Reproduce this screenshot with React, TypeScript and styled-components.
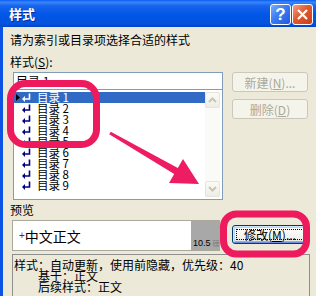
import React from 'react';
import styled, { createGlobalStyle } from 'styled-components';

const Global = createGlobalStyle`
  html, body { margin: 0; padding: 0; background: #ECE9D8; }
  body { font-family: "Noto Sans CJK SC", "Liberation Sans", sans-serif; font-size: 12px; color: #000; }
`;

const Window = styled.div`
  position: relative;
  width: 316px;
  height: 296px;
  overflow: hidden;
  background: #ECE9D8;
  display: flex;
  flex-direction: column;
`;

const TitleBar = styled.div`
  height: 27px;
  flex: none;
  display: flex;
  align-items: flex-start;
  padding: 0 3px 0 9px;
  background: linear-gradient(180deg, #0A5BF5 0%, #3A86F8 8%, #1763EE 22%, #0056E6 55%, #0552DF 88%, #0044C6 100%);
`;

const Title = styled.div`
  flex: 1;
  color: #fff;
  font-weight: bold;
  font-size: 13px;
  line-height: 16px;
  margin-top: 6px;
  text-shadow: 1px 1px 0 #0A2A9C;
`;

const TitleButtons = styled.div`
  display: flex;
  gap: 1px;
  margin-top: 4px;
`;

const TitleButton = styled.div<{ $variant: 'help' | 'close' }>`
  width: 21px;
  height: 21px;
  box-sizing: border-box;
  border: 1px solid #fff;
  border-radius: 3px;
  display: flex;
  align-items: center;
  justify-content: center;
  color: #fff;
  font-family: "Liberation Sans", sans-serif;
  font-weight: bold;
  font-size: 17px;
  background: ${p => p.$variant === 'help'
    ? 'linear-gradient(135deg, #79AEFF 0%, #3B7CF2 45%, #2258DA 100%)'
    : 'linear-gradient(135deg, #F4A088 0%, #E1592F 45%, #C8401A 100%)'};
`;

const Body = styled.div`
  flex: 1;
  min-height: 0;
  border-left: 3px solid #0B53E4;
  padding: 6px 0 0 7px;
  display: flex;
  flex-direction: column;
`;

const TextLine = styled.div<{ $gap?: number }>`
  height: 14px;
  line-height: 14px;
  margin-top: ${p => p.$gap ?? 0}px;
  white-space: nowrap;
`;

const Key = styled.span`
  text-decoration: underline;
`;

const MainRow = styled.div`
  display: flex;
  margin: 3px 0 0 3px;
  gap: 9px;
  align-items: flex-start;
`;

const LeftColumn = styled.div`
  width: 210px;
  display: flex;
  flex-direction: column;
`;

const InputBox = styled.div`
  height: 17px;
  box-sizing: border-box;
  border: 1px solid #7F9DB9;
  border-bottom: none;
  background: #fff;
  padding-left: 2px;
  line-height: 16px;
  white-space: nowrap;
`;

const ListBox = styled.div`
  height: 111px;
  box-sizing: border-box;
  border: 1px solid #7F9DB9;
  background: #fff;
  padding: 2px 2px 2px 0;
  display: flex;
`;

const Rows = styled.div`
  flex: 1;
  display: flex;
  flex-direction: column;
`;

const Row = styled.div<{ $selected?: boolean }>`
  height: 11px;
  flex: none;
  display: flex;
  align-items: center;
  background: ${p => (p.$selected ? '#316AC5' : 'transparent')};
  color: ${p => (p.$selected ? '#fff' : '#000')};
`;

const Marker = styled.div`
  width: 8px;
  height: 11px;
  display: flex;
  align-items: center;
  padding-left: 2px;
  box-sizing: border-box;
`;

const RowText = styled.span`
  margin-left: 6px;
  line-height: 11px;
  font-size: 11.5px;
  white-space: pre;
`;

const ScrollBar = styled.div`
  width: 15px;
  display: flex;
  flex-direction: column;
  justify-content: space-between;
  background: #FAFAF6;
`;

const ScrollButton = styled.div`
  height: 16px;
  box-sizing: border-box;
  border: 1px solid #E6E4DA;
  border-radius: 2px;
  background: linear-gradient(180deg, #FBFAF6, #EEEDE5);
  display: flex;
  align-items: center;
  justify-content: center;
`;

const RightColumn = styled.div`
  display: flex;
  flex-direction: column;
  gap: 7px;
`;

const DialogButton = styled.div<{ $disabled?: boolean }>`
  position: relative;
  width: 76px;
  height: ${p => (p.$disabled ? 20 : 19)}px;
  box-sizing: border-box;
  border-radius: 3px;
  display: flex;
  align-items: center;
  justify-content: center;
  white-space: nowrap;
  font-size: 12px;
  ${p => p.$disabled
    ? `border: 1px solid #CAC8BB; background: #F5F4EA; color: #ACA899;`
    : `border: 1px solid #003C74; background: linear-gradient(180deg, #FFFFFF 0%, #F3F2EC 70%, #E3E1D6 100%);
       box-shadow: inset 1px 1px 0 #CEE7FF, inset -1px -1px 0 #6A8FE0, inset 2px 2px 0 #BCD4F6, inset -2px -2px 0 #8FB0EC;
       &::after { content: ''; position: absolute; inset: 3px; border: 1px dotted #000; }`}
`;

const PreviewRow = styled.div`
  display: flex;
  align-items: flex-start;
  margin: 3px 0 0 2px;
`;

const PreviewBox = styled.div`
  width: 208px;
  height: 31px;
  box-sizing: border-box;
  border: 1px solid #ACA899;
  background: #fff;
  display: flex;
  margin-right: 12px;
`;

const PreviewText = styled.div`
  flex: 1;
  display: flex;
  align-items: center;
  padding-left: 6px;
  font-size: 14px;
`;

const Plus = styled.span`
  font-family: "Liberation Sans", sans-serif;
  font-size: 10px;
  color: #7A1248;
`;

const SizePanel = styled.div`
  width: 28px;
  background: #A8A8A8;
  display: flex;
  align-items: flex-end;
  padding: 0 0 2px 2px;
  box-sizing: border-box;
  white-space: nowrap;
`;

const SizeValue = styled.span`
  font-family: "Liberation Sans", sans-serif;
  font-size: 9px;
  line-height: 10px;
  color: #000;
`;

const SizeUnit = styled.span`
  font-size: 7px;
  line-height: 10px;
  color: #7A7A7A;
  margin-left: 2px;
`;

const ButtonSlot = styled.div`
  margin-top: 5px;
`;

const Description = styled.div`
  flex: 1;
  margin: 3px 0 0 2px;
  width: 298px;
  box-sizing: border-box;
  border: 1px solid #8E8F8F;
  border-bottom: none;
  padding: 4px 1px 0 1px;
  font-size: 12px;
  line-height: 11px;
`;

const DescLine = styled.div<{ $indent?: boolean }>`
  height: 11px;
  white-space: nowrap;
  padding-left: ${p => (p.$indent ? 24 : 0)}px;
`;

const Overlay = styled.svg`
  position: absolute;
  left: 0;
  top: 0;
  pointer-events: none;
`;

const ReturnIcon = ({ color }: { color: string }) => (
  <svg width="9" height="9" viewBox="0 0 9 9">
    <path d="M7.5 0.5 V6 H2.5" fill="none" stroke={color} strokeWidth="1.6" />
    <polygon points="0,6 3,3 3,9" fill={color} />
  </svg>
);

const Pointer = () => (
  <svg width="4" height="7" viewBox="0 0 4 7">
    <polygon points="0,0 4,3.5 0,7" fill="#000" />
  </svg>
);

const Chevron = ({ up }: { up?: boolean }) => (
  <svg width="9" height="6" viewBox="0 0 9 6">
    <polyline
      points={up ? '1,5 4.5,1.5 8,5' : '1,1 4.5,4.5 8,1'}
      fill="none"
      stroke="#C8C5B6"
      strokeWidth="2"
    />
  </svg>
);

const entries = [1, 2, 3, 4, 5, 6, 7, 8, 9];

export default function App() {
  return (
    <>
      <Global />
      <Window>
        <TitleBar>
          <Title>样式</Title>
          <TitleButtons>
            <TitleButton $variant="help">?</TitleButton>
            <TitleButton $variant="close">
              <svg width="13" height="13" viewBox="0 0 13 13">
                <path d="M2 2 L11 11 M11 2 L2 11" stroke="#fff" strokeWidth="2.2" />
              </svg>
            </TitleButton>
          </TitleButtons>
        </TitleBar>
        <Body>
          <TextLine>请为索引或目录项选择合适的样式</TextLine>
          <TextLine $gap={8}>
            样式(<Key>S</Key>):
          </TextLine>
          <MainRow>
            <LeftColumn>
              <InputBox>目录 1</InputBox>
              <ListBox>
                <Rows>
                  {entries.map(n => (
                    <Row key={n} $selected={n === 1}>
                      <Marker>{n === 1 && <Pointer />}</Marker>
                      <ReturnIcon color={n === 1 ? '#fff' : '#000080'} />
                      <RowText>目录 {n}</RowText>
                    </Row>
                  ))}
                </Rows>
                <ScrollBar>
                  <ScrollButton>
                    <Chevron up />
                  </ScrollButton>
                  <ScrollButton>
                    <Chevron />
                  </ScrollButton>
                </ScrollBar>
              </ListBox>
            </LeftColumn>
            <RightColumn>
              <DialogButton $disabled>
                新建(<Key>N</Key>)...
              </DialogButton>
              <DialogButton $disabled>
                删除(<Key>D</Key>)
              </DialogButton>
            </RightColumn>
          </MainRow>
          <TextLine $gap={3}>预览</TextLine>
          <PreviewRow>
            <PreviewBox>
              <PreviewText>
                <Plus>+</Plus>中文正文
              </PreviewText>
              <SizePanel>
                <SizeValue>10.5</SizeValue>
                <SizeUnit>磅</SizeUnit>
              </SizePanel>
            </PreviewBox>
            <ButtonSlot>
              <DialogButton>
                修改(<Key>M</Key>)...
              </DialogButton>
            </ButtonSlot>
          </PreviewRow>
          <Description>
            <DescLine>样式：自动更新，使用前隐藏，优先级：40</DescLine>
            <DescLine $indent>基于：正文</DescLine>
            <DescLine $indent>后续样式：正文</DescLine>
          </Description>
        </Body>
        <Overlay width="316" height="296" viewBox="0 0 316 296">
          <rect x="10.5" y="83.5" width="86" height="61" rx="15" fill="none" stroke="#EE1A5E" strokeWidth="7" />
          <rect x="223.5" y="214" width="83" height="40" rx="13" fill="none" stroke="#EE1A5E" strokeWidth="7" />
          <polygon
            points="110.8,131.7 177.8,168 183,158.9 199,184 169,183.1 174.2,174 109.2,134.3"
            fill="#EE1D63"
          />
        </Overlay>
      </Window>
    </>
  );
}
